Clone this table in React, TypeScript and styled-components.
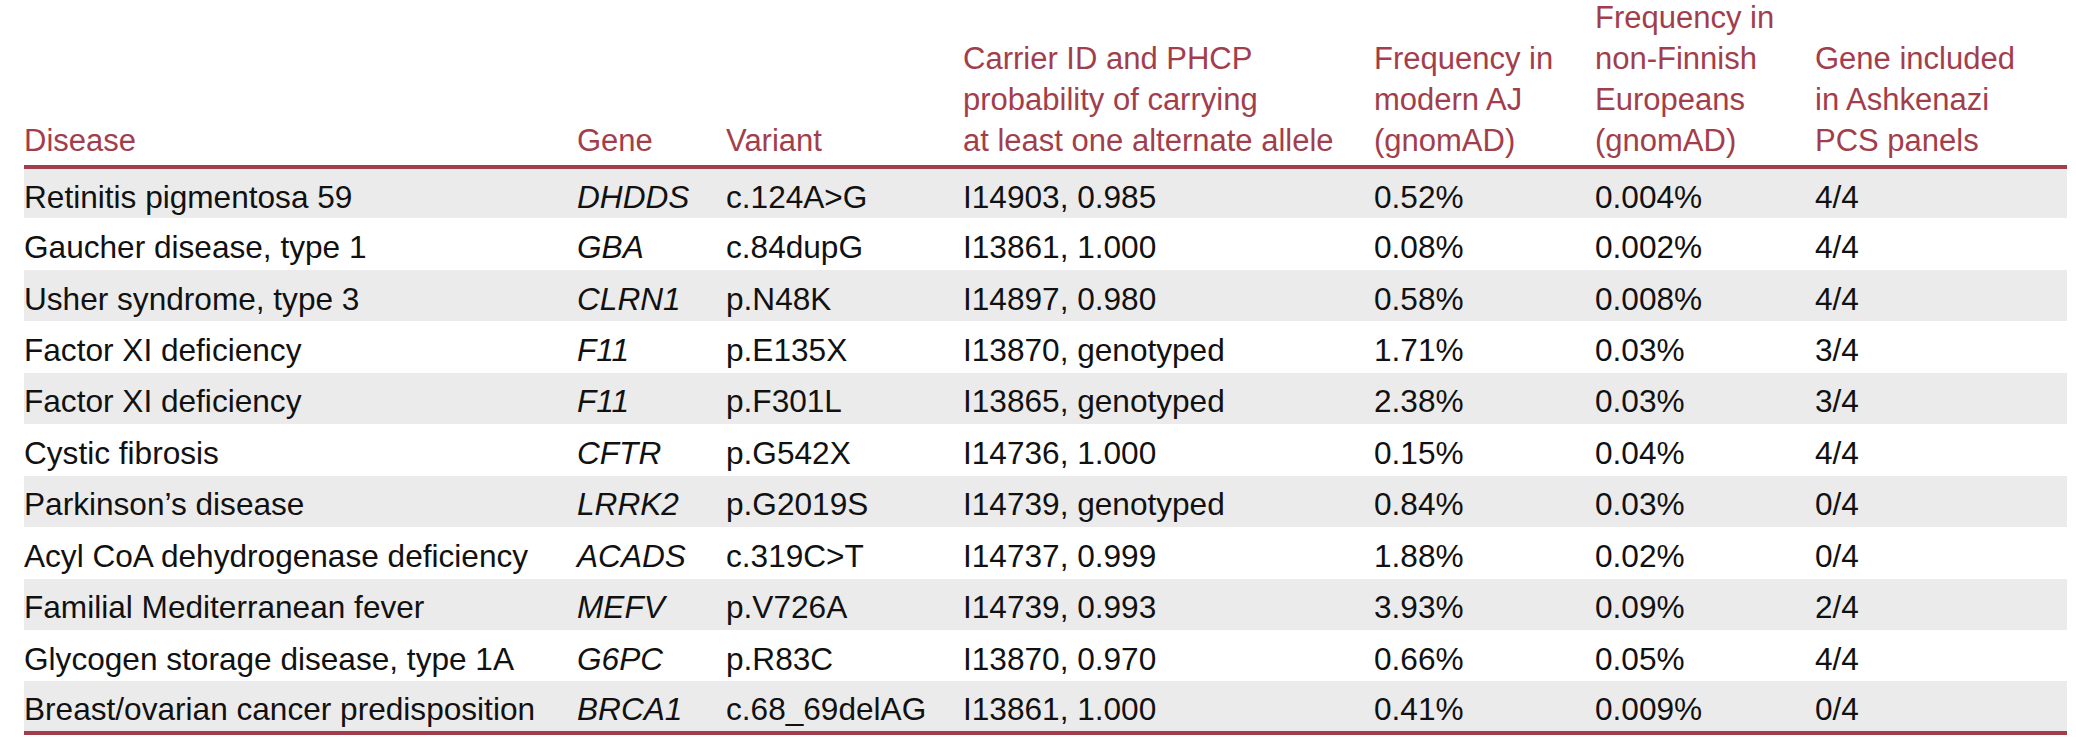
import React from "react";
import styled, { createGlobalStyle } from "styled-components";

const accent = "#a23e4c";
const stripe = "#ebebeb";

const GlobalStyle = createGlobalStyle`
  html, body {
    margin: 0;
    padding: 0;
    background: #ffffff;
  }
  body {
    font-family: "Liberation Sans", Arial, sans-serif;
  }
`;

const Page = styled.div`
  padding-left: 24px;
  margin-top: -3px;
`;

const Table = styled.table`
  width: 2043px;
  table-layout: fixed;
  border-collapse: collapse;
  font-size: 31px;
  color: #111111;
`;

const HeadCell = styled.th`
  text-align: left;
  vertical-align: bottom;
  font-weight: normal;
  color: ${accent};
  line-height: 41px;
  padding: 0 0 4px 0;
  white-space: nowrap;
  border-bottom: 4px solid ${accent};
`;

const Row = styled.tr<{ $shaded: boolean }>`
  height: 51.45px;
  background: ${(p) => (p.$shaded ? stripe : "transparent")};
  &:last-child td {
    border-bottom: 4px solid ${accent};
  }
`;

const Cell = styled.td<{ $italic?: boolean }>`
  padding: 6px 0 0 0;
  vertical-align: middle;
  white-space: nowrap;
  line-height: 36px;
  font-size: 31.6px;
  font-style: ${(p) => (p.$italic ? "italic" : "normal")};
`;

const columns = [553, 149, 237, 411, 221, 220, 252];

const headers: string[][] = [
  ["Disease"],
  ["Gene"],
  ["Variant"],
  ["Carrier ID and PHCP", "probability of carrying", "at least one alternate allele"],
  ["Frequency in", "modern AJ", "(gnomAD)"],
  ["Frequency in", "non-Finnish", "Europeans", "(gnomAD)"],
  ["Gene included", "in Ashkenazi", "PCS panels"],
];

type Entry = [string, string, string, string, string, string, string];

const rows: Entry[] = [
  ["Retinitis pigmentosa 59", "DHDDS", "c.124A>G", "I14903, 0.985", "0.52%", "0.004%", "4/4"],
  ["Gaucher disease, type 1", "GBA", "c.84dupG", "I13861, 1.000", "0.08%", "0.002%", "4/4"],
  ["Usher syndrome, type 3", "CLRN1", "p.N48K", "I14897, 0.980", "0.58%", "0.008%", "4/4"],
  ["Factor XI deficiency", "F11", "p.E135X", "I13870, genotyped", "1.71%", "0.03%", "3/4"],
  ["Factor XI deficiency", "F11", "p.F301L", "I13865, genotyped", "2.38%", "0.03%", "3/4"],
  ["Cystic fibrosis", "CFTR", "p.G542X", "I14736, 1.000", "0.15%", "0.04%", "4/4"],
  ["Parkinson\u2019s disease", "LRRK2", "p.G2019S", "I14739, genotyped", "0.84%", "0.03%", "0/4"],
  ["Acyl CoA dehydrogenase deficiency", "ACADS", "c.319C>T", "I14737, 0.999", "1.88%", "0.02%", "0/4"],
  ["Familial Mediterranean fever", "MEFV", "p.V726A", "I14739, 0.993", "3.93%", "0.09%", "2/4"],
  ["Glycogen storage disease, type 1A", "G6PC", "p.R83C", "I13870, 0.970", "0.66%", "0.05%", "4/4"],
  ["Breast/ovarian cancer predisposition", "BRCA1", "c.68_69delAG", "I13861, 1.000", "0.41%", "0.009%", "0/4"],
];

export default function App() {
  return (
    <Page>
      <GlobalStyle />
      <Table>
        <colgroup>
          {columns.map((w, i) => (
            <col key={i} style={{ width: w }} />
          ))}
        </colgroup>
        <thead>
          <tr>
            {headers.map((lines, i) => (
              <HeadCell key={i}>
                {lines.map((l, j) => (
                  <React.Fragment key={j}>
                    {j > 0 && <br />}
                    {l}
                  </React.Fragment>
                ))}
              </HeadCell>
            ))}
          </tr>
        </thead>
        <tbody>
          {rows.map((r, i) => (
            <Row key={i} $shaded={i % 2 === 0}>
              {r.map((v, j) => (
                <Cell key={j} $italic={j === 1}>
                  {v}
                </Cell>
              ))}
            </Row>
          ))}
        </tbody>
      </Table>
    </Page>
  );
}
